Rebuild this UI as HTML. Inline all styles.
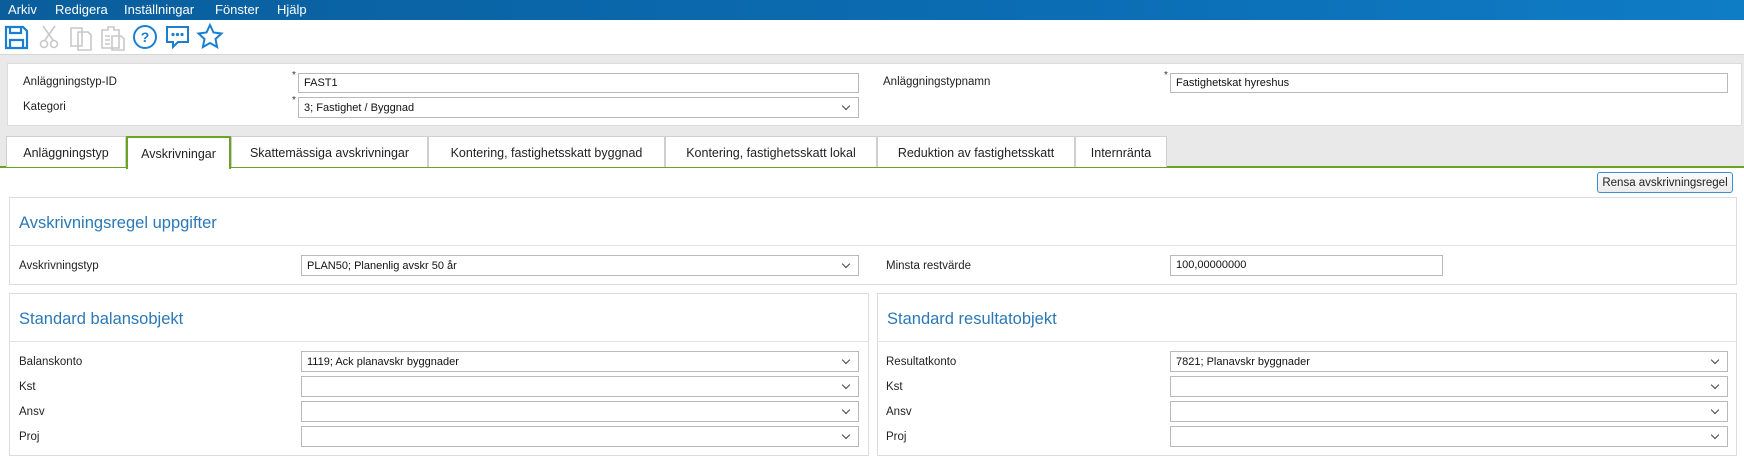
<!DOCTYPE html>
<html><head><meta charset="utf-8"><style>
*{box-sizing:border-box;margin:0;padding:0}
body{width:1744px;height:459px;overflow:hidden;background:#fff;font-family:"Liberation Sans",sans-serif;font-size:12px;color:#222;position:relative}
.a{position:absolute}
.menu{left:0;top:0;width:1744px;height:20px;background:linear-gradient(90deg,#0a5e9c,#0b6db4 60%,#0f7cc6)}
.menu span{position:absolute;top:2px;color:#fff;font-size:13px}
.gray{left:0;top:54px;width:1744px;height:113px;background:#e9e9e9;border-top:1px solid #d6d6d6}
.panel{background:#fff;border:1px solid #dcdcdc}
.lbl{font-size:11.5px;color:#222}
.inp{background:#fff;border:1px solid #b9b9b9;height:20px;font-size:11px;padding:3px 5px;color:#111}
.dd{background:#fff;border:1px solid #b9b9b9;height:21px;font-size:11px;padding:4px 5px;color:#111}
.dd::after{content:"";position:absolute;right:9px;top:5px;width:5px;height:5px;border-right:1px solid #444;border-bottom:1px solid #444;transform:rotate(45deg)}
.tab{top:136px;height:31px;border:1px solid #cfcfcf;border-bottom:none;background:#fff;font-size:12.5px;padding-top:9px;text-align:center;color:#222}
.h{font-size:16.5px;color:#2b78b6}
.star{font-size:10px;color:#333}
</style></head><body>
<div class="a menu">
<span style="left:8px">Arkiv</span><span style="left:55px">Redigera</span><span style="left:124px">Inställningar</span><span style="left:215px">Fönster</span><span style="left:277px">Hjälp</span>
</div>
<svg class="a" style="left:0;top:20px" width="240" height="34" viewBox="0 0 240 34">
<g fill="none" stroke="#1b7fd0" stroke-width="2.2">
<path d="M6 7h17l4 4v17H6z"/><path d="M10 7v6h11V7"/><path d="M10 28v-8h13v8"/>
</g>
<g fill="none" stroke="#c8c8c8" stroke-width="1.6">
<path d="M43 6l10 14M55 6L45 20"/><circle cx="44" cy="24" r="3.5"/><circle cx="54" cy="24" r="3.5"/>
<path d="M71 8h11v18H71z"/><path d="M78 12h10l3 3v15H78z"/>
<path d="M102 10h6v-3h6v3h5v18h-17z"/><path d="M112 16h9l3 3v11h-12z"/><path d="M105 16h5M105 20h5M105 24h5"/>
</g>
<g fill="none" stroke="#1b7fd0" stroke-width="2">
<circle cx="145" cy="17" r="11"/>
<path d="M167 7h21v15h-10l-5 5v-5h-6z"/>
<path d="M210 5l3.5 7.5 8 1-6 5.5 1.6 8-7.1-4-7.1 4 1.6-8-6-5.5 8-1z"/>
</g>
<text x="145" y="22" text-anchor="middle" font-size="14" font-weight="bold" fill="#1b7fd0" font-family="Liberation Sans">?</text>
<g fill="#1b7fd0"><circle cx="173" cy="14.5" r="1.6"/><circle cx="177.5" cy="14.5" r="1.6"/><circle cx="182" cy="14.5" r="1.6"/></g>
</svg>
<div class="a gray"></div>
<div class="a panel" style="left:7px;top:63px;width:1735px;height:63px"></div>
<div class="a lbl" style="left:23px;top:76px">Anläggningstyp-ID</div>
<div class="a lbl" style="left:23px;top:101px">Kategori</div>
<div class="a star" style="left:292px;top:70px">*</div>
<div class="a star" style="left:292px;top:95px">*</div>
<div class="a inp" style="left:298px;top:73px;width:561px">FAST1</div>
<div class="a dd" style="left:298px;top:97px;width:561px">3; Fastighet / Byggnad</div>
<div class="a lbl" style="left:883px;top:76px">Anläggningstypnamn</div>
<div class="a star" style="left:1164px;top:70px">*</div>
<div class="a inp" style="left:1170px;top:73px;width:558px">Fastighetskat hyreshus</div>
<div class="a" style="left:0;top:166px;width:1744px;height:2px;background:#6ba423"></div>
<div class="a tab" style="left:6px;width:120px">Anläggningstyp</div>
<div class="a tab" style="left:126px;width:105px;border:2px solid #6ba423;border-bottom:none;height:33px;background:#fff">Avskrivningar</div>
<div class="a tab" style="left:231px;width:197px">Skattemässiga avskrivningar</div>
<div class="a tab" style="left:428px;width:237px">Kontering, fastighetsskatt byggnad</div>
<div class="a tab" style="left:665px;width:212px">Kontering, fastighetsskatt lokal</div>
<div class="a tab" style="left:877px;width:198px">Reduktion av fastighetsskatt</div>
<div class="a tab" style="left:1075px;width:92px">Internränta</div>
<div class="a" style="left:1597px;top:172px;width:136px;height:21px;border:1px solid #3a8ed8;border-radius:3px;background:linear-gradient(#fafafa,#ececec);font-size:11.5px;text-align:center;padding-top:4px;white-space:nowrap">Rensa avskrivningsregel</div>
<div class="a panel" style="left:9px;top:197px;width:1728px;height:88px"></div>
<div class="a" style="left:10px;top:245px;width:1726px;height:1px;background:#e2e2e2"></div>
<div class="a h" style="left:19px;top:214px">Avskrivningsregel uppgifter</div>
<div class="a lbl" style="left:19px;top:260px">Avskrivningstyp</div>
<div class="a dd" style="left:301px;top:255px;width:558px">PLAN50; Planenlig avskr 50 år</div>
<div class="a lbl" style="left:886px;top:260px">Minsta restvärde</div>
<div class="a inp" style="left:1170px;top:255px;width:273px;height:21px">100,00000000</div>
<div class="a panel" style="left:9px;top:293px;width:860px;height:163px"></div>
<div class="a" style="left:10px;top:341px;width:858px;height:1px;background:#e2e2e2"></div>
<div class="a h" style="left:19px;top:310px">Standard balansobjekt</div>
<div class="a lbl" style="left:19px;top:356px">Balanskonto</div>
<div class="a lbl" style="left:19px;top:381px">Kst</div>
<div class="a lbl" style="left:19px;top:406px">Ansv</div>
<div class="a lbl" style="left:19px;top:431px">Proj</div>
<div class="a dd" style="left:301px;top:351px;width:558px">1119; Ack planavskr byggnader</div>
<div class="a dd" style="left:301px;top:376px;width:558px"></div>
<div class="a dd" style="left:301px;top:401px;width:558px"></div>
<div class="a dd" style="left:301px;top:426px;width:558px"></div>
<div class="a panel" style="left:877px;top:293px;width:860px;height:163px"></div>
<div class="a" style="left:878px;top:341px;width:858px;height:1px;background:#e2e2e2"></div>
<div class="a h" style="left:887px;top:310px">Standard resultatobjekt</div>
<div class="a lbl" style="left:886px;top:356px">Resultatkonto</div>
<div class="a lbl" style="left:886px;top:381px">Kst</div>
<div class="a lbl" style="left:886px;top:406px">Ansv</div>
<div class="a lbl" style="left:886px;top:431px">Proj</div>
<div class="a dd" style="left:1170px;top:351px;width:558px">7821; Planavskr byggnader</div>
<div class="a dd" style="left:1170px;top:376px;width:558px"></div>
<div class="a dd" style="left:1170px;top:401px;width:558px"></div>
<div class="a dd" style="left:1170px;top:426px;width:558px"></div>
</body></html>
